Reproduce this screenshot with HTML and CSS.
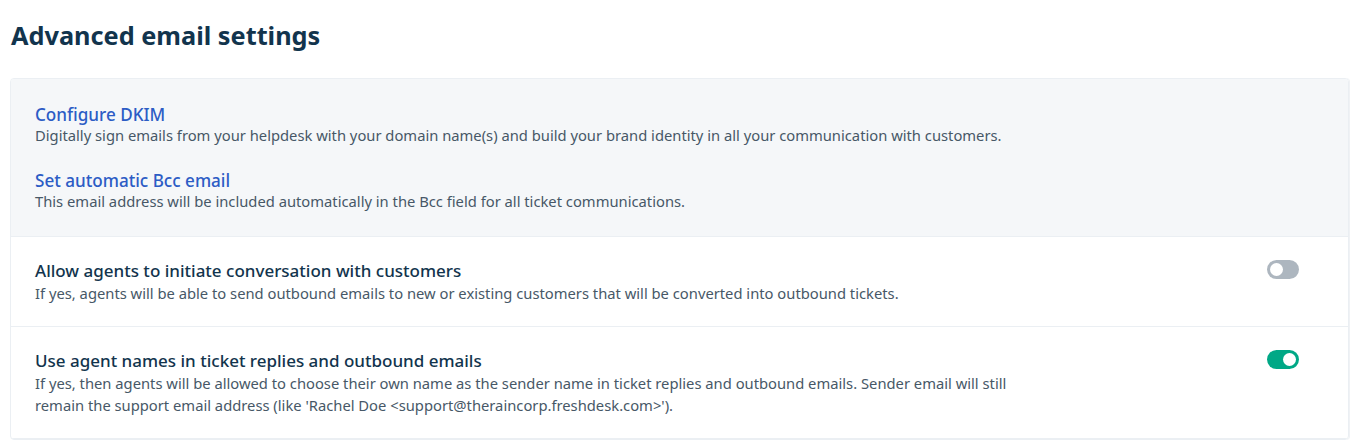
FILE: index.html
```html
<!DOCTYPE html>
<html>
<head>
<meta charset="utf-8">
<link rel="stylesheet" href="styles.css">
</head>
<body>
<div class="page">
  <h1 class="title">Advanced email settings</h1>
  <div class="card">
    <div class="links">
      <div class="link-item">
        <a class="link" href="#">Configure DKIM</a>
        <p class="desc">Digitally sign emails from your helpdesk with your domain name(s) and build your brand identity in all your communication with customers.</p>
      </div>
      <div class="link-item">
        <a class="link" href="#">Set automatic Bcc email</a>
        <p class="desc">This email address will be included automatically in the Bcc field for all ticket communications.</p>
      </div>
    </div>
    <div class="row">
      <div class="row-text">
        <div class="row-title">Allow agents to initiate conversation with customers</div>
        <p class="desc">If yes, agents will be able to send outbound emails to new or existing customers that will be converted into outbound tickets.</p>
      </div>
      <span class="toggle"><span class="knob"></span></span>
    </div>
    <div class="row">
      <div class="row-text">
        <div class="row-title">Use agent names in ticket replies and outbound emails</div>
        <p class="desc">If yes, then agents will be allowed to choose their own name as the sender name in ticket replies and outbound emails. Sender email will still remain the support email address (like 'Rachel Doe &lt;support@theraincorp.freshdesk.com&gt;').</p>
      </div>
      <span class="toggle on"><span class="knob"></span></span>
    </div>
  </div>
</div>
</body>
</html>
```
FILE: styles.css
```css
* { box-sizing: border-box; }
html, body { margin: 0; padding: 0; background: #fff; }
body {
  font-family: "Segoe UI", "Noto Sans", "Open Sans", sans-serif;
  color: #12344d;
}
.page { padding: 18px 9px 0 10px; }
.title {
  margin: 0 0 26px 1px;
  font-size: 25.3px;
  font-weight: 700;
  line-height: 34px;
  color: #12344d;
}
.card {
  border: 1px solid #ebeff3;
  border-radius: 4px;
  box-shadow: 1px 0 0 #f0f2f5;
  overflow: hidden;
}
.links {
  background: #f5f7f9;
  padding: 26px 24px 24px 24px;
  border-bottom: 1px solid #ebeff3;
  display: flex;
  flex-direction: column;
  gap: 25px;
}
.link {
  display: block;
  font-size: 17.1px;
  line-height: 19px;
  color: #2c5cc5;
  text-decoration: none;
  font-weight: 500;
}
.desc {
  margin: 0;
  font-size: 14.75px;
  line-height: 22px;
  color: #475867;
  max-width: 1000px;
}
.row {
  display: flex;
  justify-content: space-between;
  align-items: flex-start;
  padding: 23px 49px 22px 24px;
  border-bottom: 1px solid #ebeff3;
}
.row-title {
  font-size: 17px;
  line-height: 22px;
  font-weight: 500;
  color: #12344d;
}
.toggle {
  flex: none;
  width: 32px;
  height: 19px;
  border-radius: 10px;
  background: #adb6bf;
  margin-top: 0;
  display: flex;
  align-items: center;
  padding: 0 3px;
}
.toggle.on { background: #00a886; justify-content: flex-end; }
.knob {
  width: 13px;
  height: 13px;
  border-radius: 50%;
  background: #fff;
}
```
